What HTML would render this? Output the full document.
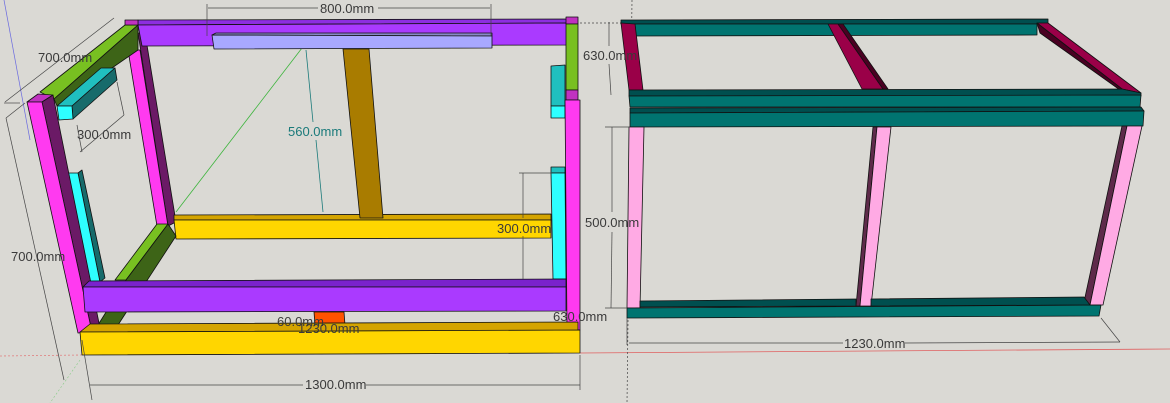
<!DOCTYPE html>
<html><head><meta charset="utf-8"><style>
html,body{margin:0;padding:0;background:#dad9d4;}
svg{display:block}
text{font-family:"Liberation Sans",sans-serif;font-size:13px;fill:#3a3a3a}
</style></head><body>
<svg width="1170" height="403" viewBox="0 0 1170 403" xmlns="http://www.w3.org/2000/svg">
<rect width="1170" height="403" fill="#dad9d4"/>
<line x1="4" y1="0" x2="30" y2="140" stroke="#6a6ae0" stroke-width="0.7"/>
<line x1="176" y1="212" x2="302" y2="48" stroke="#3cb43c" stroke-width="0.8"/>
<line x1="0" y1="356" x2="82" y2="355" stroke="#e08080" stroke-width="0.8" stroke-dasharray="2,2"/>
<line x1="580" y1="353" x2="1170" y2="349" stroke="#e06060" stroke-width="0.8"/>
<line x1="632" y1="0" x2="627" y2="403" stroke="#444" stroke-width="0.7" stroke-dasharray="2,2"/>
<line x1="580" y1="23" x2="625" y2="23" stroke="#444" stroke-width="0.7" stroke-dasharray="2,2"/>
<line x1="80" y1="360" x2="50" y2="403" stroke="#8c8" stroke-width="0.6" stroke-dasharray="2,2"/>

<g stroke="#111" stroke-width="0.8" stroke-linejoin="round">
<polygon points="138,33 145,33 176,222 168,226" fill="#6b1a66"/>
<polygon points="128,50 140,50 168,226 157,226" fill="#ff3af0"/>
<polygon points="138,20 567,19 567,23 138,25" fill="#8d2ee0"/>
<polygon points="138,25 567,23 567,45 142,46" fill="#aa3aff"/>
<!-- lavender bar -->
<polygon points="212,35 216,33 492,33 492,36" fill="#8888c8"/>
<polygon points="212,35 492,36 492,48 214,49" fill="#a8a8ff"/>
<polygon points="40,92 125,25 138,25 54,99" fill="#78c021"/>
<polygon points="54,99 138,25 138,50 57,106" fill="#3d6417"/>
<polygon points="125,20 138,20 138,25 125,25" fill="#c032c0"/>
<polygon points="57,106 101,68 115,68 72,106" fill="#20bfbf"/>
<polygon points="72,106 115,68 117,80 73,119" fill="#176b6b"/>
<polygon points="57,106 72,106 73,119 59,120" fill="#2effff"/>
<polygon points="174,215 551,214 551,220 174,220" fill="#d4a400"/>
<polygon points="174,220 551,220 551,238 176,239" fill="#ffd600"/>
<polygon points="343,49 369,49 383,218 360,218" fill="#a97c00"/>
<polygon points="115,280 157,224 168,224 126,280" fill="#78c021"/>
<polygon points="98,325 126,280 168,224 176,236 118,325" fill="#3d6417"/>
<polygon points="78,173 82,170 105,278 100,282" fill="#176b6b"/>
<polygon points="65,173 78,173 100,282 86,282" fill="#2effff"/>
<polygon points="27,102 38,94 53,95 42,102" fill="#c032c0"/>
<polygon points="42,102 53,95 100,328 92,332" fill="#6b1a66"/>
<polygon points="27,102 42,102 92,332 78,333" fill="#ff3af0"/>
<polygon points="566,17 578,17 578,24 566,24" fill="#c032c0"/>
<polygon points="566,24 578,24 578,90 566,90" fill="#78c021"/>
<polygon points="566,90 578,90 578,100 566,100" fill="#c032c0"/>
<polygon points="551,66 565,65 565,106 551,106" fill="#20bfbf"/>
<polygon points="551,106 565,106 565,118 551,118" fill="#2effff"/>
<polygon points="551,167 565,167 565,173 551,173" fill="#20bfbf"/>
<polygon points="551,173 565,173 566,279 553,279" fill="#2effff"/>
<polygon points="565,100 580,100 580,330 567,330" fill="#ff3af0"/>
<polygon points="83,287 89,281 566,279 566,287" fill="#7a22cc"/>
<polygon points="83,287 566,287 566,311 85,312" fill="#aa3aff"/>
<polygon points="314,312 344,312 345,325 315,325" fill="#ff5200"/>
<polygon points="90,324 578,322 578,331 80,332" fill="#d4a400"/>
<polygon points="80,332 580,330 580,353 82,355" fill="#ffd600"/>

<polygon points="621,20 1048,19 1048,24 621,24" fill="#004f4f"/>
<polygon points="635,24 1037,24 1037,35 636,36" fill="#007470"/>
<polygon points="621,23 635,24 643,90 629,90" fill="#9a0048"/>
<polygon points="828,24 838,24 883,89 862,89" fill="#9a0048"/>
<polygon points="838,24 843,24 888,89 883,89" fill="#4a0022"/>
<polygon points="1037,23 1048,23 1141,93 1122,89" fill="#9a0048"/>
<polygon points="1037,23 1040,33 1120,90 1122,89" fill="#4a0022"/>
<polygon points="629,90 1122,89 1141,93 1141,96 629,96" fill="#004f4f"/>
<polygon points="629,96 1141,95 1140,107 630,107" fill="#007470"/>
<polygon points="630,108 1141,107 1144,111 630,113" fill="#004f4f"/>
<polygon points="630,113 1144,111 1143,126 630,127" fill="#007470"/>
<polygon points="629,127 644,127 640,308 627,308" fill="#ffaae4"/>
<polygon points="873,127 877,127 860,306 856,306" fill="#5e2a4a"/>
<polygon points="877,127 891,127 871,306 860,306" fill="#ffaae4"/>
<polygon points="1122,126 1127,126 1090,305 1084,302" fill="#5e2a4a"/>
<polygon points="1127,126 1142,126 1103,305 1090,305" fill="#ffaae4"/>
<polygon points="640,301 856,299 856,306 640,307" fill="#004f4f"/>
<polygon points="871,299 1084,297 1090,305 871,306" fill="#004f4f"/>
<polygon points="627,308 1101,305 1099,316 627,318" fill="#007470"/>
</g>

<g stroke="#444" stroke-width="0.7" fill="none">
<line x1="207" y1="4" x2="207" y2="36"/><line x1="491" y1="4" x2="491" y2="36"/>
<line x1="208" y1="8" x2="318" y2="8"/><line x1="378" y1="8" x2="490" y2="8"/>
<line x1="5" y1="102" x2="114" y2="18"/><line x1="4" y1="103" x2="20" y2="103"/>
<line x1="6" y1="118" x2="64" y2="380"/><line x1="6" y1="118" x2="25" y2="103"/>
<line x1="82" y1="340" x2="92" y2="400"/><line x1="90" y1="385" x2="303" y2="385"/><line x1="366" y1="385" x2="580" y2="385"/>
<line x1="580" y1="355" x2="580" y2="390"/>
<line x1="117" y1="82" x2="124" y2="115"/><line x1="77" y1="125" x2="82" y2="152"/><line x1="80" y1="152" x2="124" y2="115"/>
<line x1="523" y1="173" x2="523" y2="218"/><line x1="523" y1="236" x2="523" y2="279"/><line x1="519" y1="173" x2="552" y2="173"/>
<line x1="609" y1="22" x2="609" y2="46"/><line x1="609" y1="64" x2="611" y2="95"/>
<line x1="612" y1="127" x2="612" y2="212"/><line x1="612" y1="232" x2="611" y2="308"/>
<line x1="605" y1="127" x2="630" y2="127"/><line x1="605" y1="308" x2="627" y2="308"/>
<line x1="629" y1="343" x2="843" y2="343"/><line x1="905" y1="343" x2="1120" y2="342"/>
<line x1="1101" y1="318" x2="1120" y2="342"/><line x1="627" y1="318" x2="627" y2="345"/>
</g>
<line x1="306" y1="50" x2="313" y2="122" stroke="#1a7a7a" stroke-width="0.8"/>
<line x1="316" y1="140" x2="323" y2="212" stroke="#1a7a7a" stroke-width="0.8"/>

<text x="320" y="13">800.0mm</text>
<text x="38" y="62">700.0mm</text>
<text x="77" y="139">300.0mm</text>
<text x="288" y="136" style="fill:#1a7a7a">560.0mm</text>
<text x="497" y="233">300.0mm</text>
<text x="11" y="261">700.0mm</text>
<text x="277" y="326">60.0mm</text>
<text x="298" y="333">1230.0mm</text>
<text x="553" y="321">630.0mm</text>
<text x="305" y="389">1300.0mm</text>
<text x="583" y="60">630.0mm</text>
<text x="585" y="227">500.0mm</text>
<text x="844" y="348">1230.0mm</text>
</svg>
</body></html>
